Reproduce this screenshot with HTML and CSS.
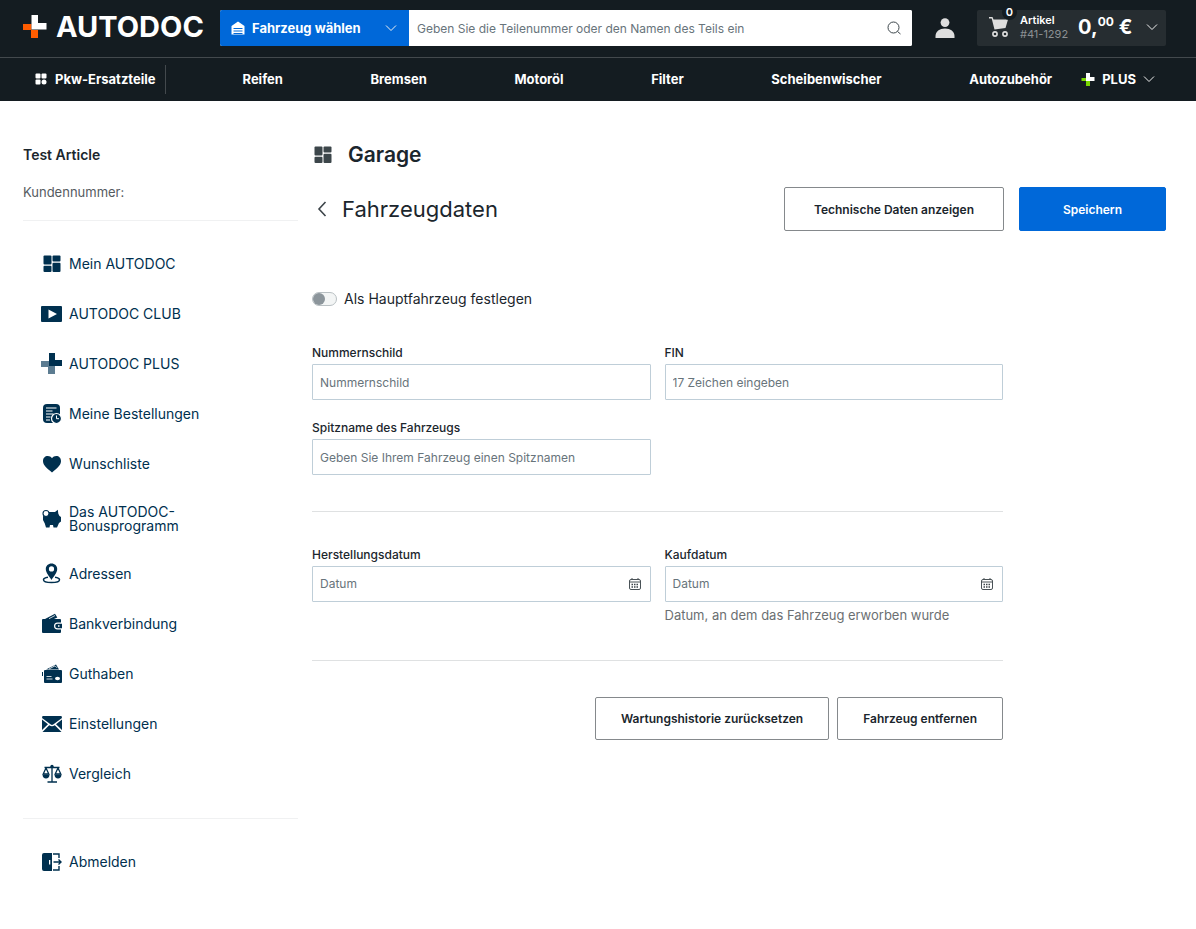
FILE: index.html
```html
<!DOCTYPE html>
<html lang="de">
<head>
<meta charset="utf-8">
<meta name="viewport" content="width=device-width, initial-scale=1">
<title>Fahrzeugdaten – Garage</title>
<link rel="stylesheet" href="styles.css">
</head>
<body>
<header class="header">
  <div class="header-top">
    <a class="logo" href="#">
      <svg class="logo-mark" viewBox="0 0 24 24" aria-hidden="true"><path fill="#ff5c00" d="M0 9h8.500v6H15v8H8v-8H0z"/><path fill="#fff" d="M8.500 0H15v8h8.500v6.500h-15z"/></svg>
      <span>AUTODOC</span>
    </a>
    <div class="search">
      <button class="vehicle-button" type="button">
        <svg class="icon-14" viewBox="0 0 14 14" aria-hidden="true"><path fill="#fff" fill-rule="evenodd" d="M7 .5 13.500 5v8.500H.5V5zM2.500 7v1h9V7zm0 2.500v1h9v-1zm0 2.500v1h9v-1z"/></svg>
        <span class="vehicle-label">Fahrzeug wählen</span>
        <svg class="chevron" viewBox="0 0 12 12" aria-hidden="true"><path d="m1 3.500 5 5 5-5"/></svg>
      </button>
      <input class="search-input" type="search" aria-label="Suche" placeholder="Geben Sie die Teilenummer oder den Namen des Teils ein">
      <button class="search-button" type="button" aria-label="Suchen">
        <svg class="icon-14" viewBox="0 0 14 14" aria-hidden="true"><g fill="none" stroke="#3c464b"><circle cx="6.500" cy="6.500" r="5.500"/><path d="m10.500 10.500 3 2.500"/></g></svg>
      </button>
    </div>
    <a class="account" href="#" aria-label="Konto"><svg viewBox="0 0 20 20" aria-hidden="true"><circle cx="10" cy="4.600" r="4.400" fill="#dedede"/><path fill="#dedede" d="M.5 20v-2C.5 13.500 4.500 10.500 10 10.500s9.500 3 9.500 7.500v2z"/></svg></a>
    <a class="cart" href="#">
      <span class="cart-icon">
        <svg viewBox="0 0 20 20" aria-hidden="true"><path fill="#dedede" d="M0 0h3.500l1 2.500H19L16.500 11l-11 1.500L2.700 1.600H0z"/><g fill="none" stroke="#dedede" stroke-width="1.600"><circle cx="6" cy="17" r="2.100"/><circle cx="16" cy="17" r="2.100"/></g></svg>
        <span class="badge">0</span>
      </span>
      <span class="cart-info"><span class="cart-title">Artikel</span><span class="cart-number">#41-1292</span></span>
      <span class="price">0,<sup>00</sup> €</span>
      <svg class="chevron" viewBox="0 0 12 12" aria-hidden="true"><path d="m1 3.500 5 5 5-5"/></svg>
    </a>
  </div>
  <nav class="nav" aria-label="Kategorien">
    <a class="nav-main" href="#">
      <svg class="icon-12" viewBox="0 0 12 12" aria-hidden="true"><g fill="#fff"><rect x=".5" y=".5" width="5" height="5" rx="1"/><rect x="6.500" y=".5" width="5" height="5" rx="1"/><rect x=".5" y="6.500" width="5" height="5" rx="1"/><circle cx="9" cy="9" r="2.500"/></g></svg>
      Pkw-Ersatzteile
    </a>
    <div class="nav-links">
      <a href="#">Reifen</a><a href="#">Bremsen</a><a href="#">Motoröl</a><a href="#">Filter</a><a href="#">Scheibenwischer</a><a href="#">Autozubehör</a>
    </div>
    <a class="nav-plus" href="#">
      <svg class="icon-14" viewBox="0 0 14 14" aria-hidden="true"><path fill="#78d700" d="M.5 6H5v3h4v5H5V9H.500z"/><path fill="#fff" d="M5 1h4v4h4.500v4H5z"/></svg>
      <span>PLUS</span>
      <svg class="chevron" viewBox="0 0 12 12" aria-hidden="true"><path d="m1 3.500 5 5 5-5"/></svg>
    </a>
  </nav>
</header>

<div class="page">
  <aside class="sidebar">
    <div class="profile">
      <p class="profile-name">Test Article</p>
      <p class="profile-number">Kundennummer:</p>
    </div>
    <nav class="menu" aria-label="Mein Konto">
      <a href="#"><svg viewBox="0 0 22 22" aria-hidden="true"><rect x="2.500" y="2.500" width="8" height="9" rx="1"/><rect x="11.500" y="2.500" width="8" height="6" rx="1"/><rect x="2.500" y="12.800" width="8" height="6.200" rx="1"/><rect x="11.500" y="9.700" width="8" height="9.300" rx="1"/></svg>Mein AUTODOC</a>
      <a href="#"><svg viewBox="0 0 22 22" aria-hidden="true"><path fill-rule="evenodd" d="M1 3h19a1 1 0 0 1 1 1v14a1 1 0 0 1-1 1H1a1 1 0 0 1-1-1V4a1 1 0 0 1 1-1zm6.500 3.500v9l8.500-4.500z"/></svg>AUTODOC CLUB</a>
      <a href="#"><svg viewBox="0 0 22 22" aria-hidden="true"><path fill="#5c7c91" d="M0 8h8v5h6v8H7v-7H0z"/><path d="M8 0h6v7h7v6H8z"/></svg>AUTODOC PLUS</a>
      <a href="#"><svg viewBox="0 0 22 22" aria-hidden="true"><rect x="2" y="1" width="17" height="19" rx="4"/><path fill="none" stroke="#fff" stroke-width="1.200" d="M5 5h10.500M5 8h6.500M5 11h7.500M5 14h4.500M5 17h4"/><circle cx="15.500" cy="15.500" r="5" stroke="#fff" stroke-width="1.200"/><path fill="none" stroke="#fff" d="M15.500 12.500v3.200h2.500"/></svg>Meine Bestellungen</a>
      <a href="#"><svg viewBox="0 0 22 22" aria-hidden="true"><path d="M11 19.500 9 17.800C4.500 14 2 11.500 2 8c0-3 2-5 4.800-5C8.500 3 10 3.800 11 5.200 12 3.800 13.500 3 15.200 3 18 3 20 5 20 8c0 3.500-2.500 6-7 9.800z"/></svg>Wunschliste</a>
      <a class="menu-tall" href="#"><svg viewBox="0 0 22 22" aria-hidden="true"><path d="M5 4h9l2.800-2.200.5 4 1.200 2.200L20 9v4.500l-2 1.500-2 4.500h-3.500L12 17H9l-.5 2.500H5L3.800 15.500 2 12V8.500z"/><circle cx="5" cy="5.500" r="3" fill="#fff" stroke="#00304f" stroke-width="1.100"/></svg><span>Das AUTODOC-Bonusprogramm</span></a>
      <a href="#"><svg viewBox="0 0 22 22" aria-hidden="true"><path fill-rule="evenodd" d="M10.500.5c3.300 0 5.700 2.400 5.700 5.500 0 3.800-3.500 7.300-5.700 11-2.200-3.700-5.700-7.200-5.700-11 0-3.100 2.400-5.500 5.700-5.500zm0 2.800a2.600 2.600 0 1 0 0 5.200 2.600 2.600 0 0 0 0-5.200z"/><path fill="none" stroke="#00304f" stroke-width="1.500" d="M7 14.300c-3 .4-4.500 1.400-4.500 2.500 0 1.800 3.500 2.800 8 2.800s8-1 8-2.800c0-1.100-1.500-2.100-4.500-2.500"/></svg>Adressen</a>
      <a href="#"><svg viewBox="0 0 22 22" aria-hidden="true"><path d="M2 6h17a1 1 0 0 1 1 1v2.500h-3.500a3.300 3.300 0 0 0 0 7H20V19a1 1 0 0 1-1 1H2a1 1 0 0 1-1-1V7a1 1 0 0 1 1-1z"/><path d="m4 6 10-5.300 2.300 3.800L13 6z"/><path stroke="#fff" stroke-width=".8" d="m8 5.700 6-3.200"/><path fill-rule="evenodd" d="M16.500 10.700H21v4.600h-4.500a2.300 2.300 0 0 1 0-4.600zm.5 1.500v1.600h1.500v-1.600z"/></svg>Bankverbindung</a>
      <a href="#"><svg viewBox="0 0 22 22" aria-hidden="true"><rect x="3" y="7" width="18" height="13" rx="1"/><path d="m5 6.500 10-5 3 5z"/><path d="M1.500 9v4" fill="none" stroke="#00304f"/><path fill="none" stroke="#fff" stroke-width=".8" d="m8 6 6-3.200 2 2M5.500 13.500h5M5.500 16h6"/><ellipse cx="16.500" cy="15.500" rx="2.500" ry="1.700" fill="#fff"/></svg>Guthaben</a>
      <a href="#"><svg viewBox="0 0 22 22" aria-hidden="true"><path d="M1.500 3h19L21 5l-8.800 6.500q-1.200.8-2.400 0L1 5zM1 6.500 7 11.300 1 17zM21 6.500 15 11.300 21 17zM8.200 12.300q2.800 2 5.600 0L20.500 19h-19z"/></svg>Einstellungen</a>
      <a href="#"><svg viewBox="0 0 22 22" aria-hidden="true"><path fill="none" stroke="#00304f" stroke-width="1.300" d="M3.500 4.500h15M11 2v17M6.500 19h9.500M5 5l-2.800 6h5.600zM17 5l-2.800 6h5.600z"/><path d="M1.500 11.500h7c0 2.500-1.500 4-3.500 4s-3.500-1.500-3.500-4zm12 0h7c0 2.500-1.500 4-3.500 4s-3.500-1.500-3.500-4z"/><circle cx="11" cy="3.500" r="1.700"/></svg>Vergleich</a>
    </nav>
    <div class="menu menu-logout">
      <a href="#"><svg viewBox="0 0 22 22" aria-hidden="true"><path fill-rule="evenodd" d="M3 2h8v18H3a2 2 0 0 1-2-2V4a2 2 0 0 1 2-2zm5 7v4.500h1.300V9z"/><path fill="none" stroke="#00304f" stroke-width="1.400" d="M12 3h6v4M12 19h6v-4M12.500 11h7.500M17.500 8.500 20 11l-2.500 2.500"/></svg>Abmelden</a>
    </div>
  </aside>

  <main class="main">
    <h1 class="title"><svg viewBox="0 0 22 22" aria-hidden="true"><rect x="2.500" y="2.500" width="8" height="9" rx="1"/><rect x="11.500" y="2.500" width="8" height="6" rx="1"/><rect x="2.500" y="12.800" width="8" height="6.200" rx="1"/><rect x="11.500" y="9.700" width="8" height="9.300" rx="1"/></svg>Garage</h1>
    <div class="toolbar">
      <a class="back" href="#" aria-label="Zurück"><svg viewBox="0 0 10 16" aria-hidden="true"><path fill="none" stroke="#3c4449" stroke-width="1.600" d="M8.500 1 2 8l6.500 7"/></svg></a>
      <h2 class="subtitle">Fahrzeugdaten</h2>
      <button class="button button-wide" type="button">Technische Daten anzeigen</button>
      <button class="button button-primary" type="submit" form="vehicle-form">Speichern</button>
    </div>
    <form class="form" id="vehicle-form">
      <div class="switch"><input type="checkbox" id="main-vehicle"><label for="main-vehicle">Als Hauptfahrzeug festlegen</label></div>
      <div class="fields">
        <div class="field"><label for="plate">Nummernschild</label><input class="box" id="plate" type="text" placeholder="Nummernschild"></div>
        <div class="field"><label for="fin">FIN</label><input class="box" id="fin" type="text" placeholder="17 Zeichen eingeben"></div>
        <div class="field"><label for="nickname">Spitzname des Fahrzeugs</label><input class="box" id="nickname" type="text" placeholder="Geben Sie Ihrem Fahrzeug einen Spitznamen"></div>
      </div>
      <div class="fields">
        <div class="field"><label for="built">Herstellungsdatum</label>
          <div class="box date"><input id="built" type="text" placeholder="Datum"><button type="button" aria-label="Kalender öffnen"><svg class="icon-12" viewBox="0 0 12 12" aria-hidden="true"><rect x=".5" y="1.500" width="11" height="10" rx="1.500" fill="none" stroke="#4a5257"/><path fill="none" stroke="#4a5257" d="M.5 4h11M3 0v2M9 0v2"/><path fill="none" stroke="#3c4449" stroke-width="1.500" stroke-dasharray="1.500 1" d="M2.500 6.500h7.500M2.500 9h7.500"/></svg></button></div>
        </div>
        <div class="field"><label for="bought">Kaufdatum</label>
          <div class="box date"><input id="bought" type="text" placeholder="Datum" aria-describedby="bought-hint"><button type="button" aria-label="Kalender öffnen"><svg class="icon-12" viewBox="0 0 12 12" aria-hidden="true"><rect x=".5" y="1.500" width="11" height="10" rx="1.500" fill="none" stroke="#4a5257"/><path fill="none" stroke="#4a5257" d="M.5 4h11M3 0v2M9 0v2"/><path fill="none" stroke="#3c4449" stroke-width="1.500" stroke-dasharray="1.500 1" d="M2.500 6.500h7.500M2.500 9h7.500"/></svg></button></div>
          <p class="hint" id="bought-hint">Datum, an dem das Fahrzeug erworben wurde</p>
        </div>
      </div>
      <div class="actions">
        <button class="button" type="button">Wartungshistorie zurücksetzen</button>
        <button class="button" type="button">Fahrzeug entfernen</button>
      </div>
    </form>
  </main>
</div>
</body>
</html>
```
FILE: styles.css
```css
* {
  box-sizing: border-box;
}

body {
  margin: 0;
  background: #fff;
  color: #1b262d;
  font-family: Inter, "Liberation Sans", sans-serif;
  font-size: 13px;
}

a {
  color: inherit;
  text-decoration: none;
}

button,
input {
  font: inherit;
  color: inherit;
}

button {
  cursor: pointer;
}

svg {
  display: block;
  flex: none;
}

h1,
h2,
p {
  margin: 0;
}

.icon-12 {
  width: 12px;
  height: 12px;
}

.icon-14 {
  width: 14px;
  height: 14px;
}

.chevron {
  width: 12px;
  height: 12px;
  fill: none;
  stroke: #f0f0f0;
}

/* Header */

.header {
  background: #141c21;
  color: #fff;
}

.header-top {
  display: flex;
  align-items: center;
  padding: 10px 30px 11px 23px;
  border-bottom: 1px solid #43494d;
}

.logo {
  display: flex;
  align-items: center;
  gap: 9px;
  width: 197px;
  padding-bottom: 3px;
  font-size: 29px;
  line-height: 32px;
  font-weight: 700;
}

.logo-mark {
  width: 24px;
  height: 24px;
}

.search {
  display: flex;
  flex: 1;
  height: 36px;
  border-radius: 2px;
  overflow: hidden;
  background: #fff;
}

.vehicle-button {
  display: flex;
  align-items: center;
  gap: 7px;
  width: 189px;
  padding: 0 12px 0 11px;
  border: 0;
  background: #0068d9;
  color: #fff;
  font-weight: 700;
}

.vehicle-label {
  flex: 1;
  text-align: left;
}

.search-input {
  flex: 1;
  min-width: 0;
  padding: 0 8px;
  border: 0;
  background: #fff;
  font-size: 12px;
  color: #141c21;
}

.search-button {
  width: 36px;
  padding: 0 11px;
  border: 0;
  background: #fff;
}

.account {
  margin: 0 22px 0 23px;
}

.account svg {
  width: 20px;
  height: 20px;
}

.cart {
  display: flex;
  align-items: center;
  width: 189px;
  height: 36px;
  padding: 0 8px 2px 12px;
  border-radius: 2px;
  background: #262d31;
}

.cart-icon {
  position: relative;
}

.cart-icon svg {
  width: 20px;
  height: 20px;
}

.badge {
  position: absolute;
  top: -12px;
  right: -8px;
  width: 15px;
  height: 15px;
  border-radius: 50%;
  background: #141c21;
  font-size: 11px;
  line-height: 15px;
  font-weight: 600;
  text-align: center;
}

.cart-info {
  display: flex;
  flex-direction: column;
  margin-left: 11px;
  font-size: 11px;
  line-height: 14px;
}

.cart-title {
  font-weight: 600;
}

.cart-number {
  color: #8c9194;
}

.price {
  flex: 1;
  margin-left: 10px;
  font-size: 20px;
  line-height: 32px;
  font-weight: 700;
  white-space: nowrap;
}

.price sup {
  font-size: 12px;
  line-height: 12px;
}

.nav {
  display: flex;
  align-items: center;
  height: 43px;
  padding: 0 41px 0 35px;
  font-weight: 700;
}

.nav-main {
  display: flex;
  align-items: center;
  gap: 8px;
  height: 29px;
  padding: 0 9px 2px 0;
  border-right: 1px solid #43494d;
}

.nav-links {
  display: flex;
  flex: 1;
  justify-content: space-between;
  margin: 0 29px 0 77px;
  padding-bottom: 2px;
}

.nav-plus {
  display: flex;
  align-items: center;
  gap: 7px;
  padding-bottom: 2px;
}

/* Sidebar */

.page {
  display: flex;
  gap: 14px;
  padding: 39px 30px 36px 23px;
}

.sidebar {
  flex: none;
  width: 275px;
}

.profile {
  padding-bottom: 18px;
  border-bottom: 1px solid #f0f1f2;
}

.profile-name {
  font-size: 14px;
  line-height: 30px;
  font-weight: 600;
}

.profile-number {
  padding-top: 12px;
  line-height: 20px;
  color: #555b5f;
}

.menu {
  display: flex;
  flex-direction: column;
  padding: 18px 0;
  color: #00304f;
  font-size: 14px;
  line-height: 14px;
}

.menu a {
  display: flex;
  align-items: center;
  gap: 6px;
  min-height: 50px;
  padding-left: 18px;
}

.menu .menu-tall {
  min-height: 60px;
}

.menu-tall span {
  width: 140px;
}

.menu svg {
  width: 22px;
  height: 22px;
  fill: #00304f;
}

.menu-logout {
  margin-top: 1px;
  border-top: 1px solid #f0f1f2;
}

/* Vehicle details */

.main {
  flex: 1;
  min-width: 0;
}

.title {
  display: flex;
  align-items: center;
  gap: 14px;
  font-size: 21px;
  line-height: 30px;
  font-weight: 600;
}

.title svg {
  width: 22px;
  height: 22px;
  fill: #3c464a;
}

.toolbar {
  display: flex;
  align-items: center;
  gap: 15px;
  margin-top: 17px;
}

.back {
  padding-left: 5px;
}

.back svg {
  width: 10px;
  height: 16px;
}

.subtitle {
  flex: 1;
  font-size: 22px;
  line-height: 28px;
  font-weight: 400;
}

.button {
  min-height: 43px;
  padding: 0 25px;
  border: 1px solid #85898c;
  border-radius: 2px;
  background: #fff;
  font-size: 12px;
  font-weight: 600;
}

.button-wide {
  min-width: 220px;
  min-height: 44px;
}

.button-primary {
  min-width: 147px;
  min-height: 44px;
  border-color: #0068d9;
  background: #0068d9;
  color: #fff;
}

.form {
  margin-right: 163px;
  padding-top: 58px;
}

.switch {
  display: flex;
  align-items: center;
  gap: 7px;
  padding-bottom: 1px;
  font-size: 14px;
  line-height: 20px;
}

.switch input {
  appearance: none;
  display: flex;
  align-items: center;
  width: 25px;
  height: 14px;
  margin: 0;
  border: 1px solid #b9c0c3;
  border-radius: 7px;
  background: #f3f5f5;
}

.switch input::before {
  content: "";
  width: 12px;
  height: 12px;
  border-radius: 50%;
  background: #8c959b;
}

.fields {
  display: grid;
  grid-template-columns: 1fr 1fr;
  gap: 20px 14px;
  padding: 35px 0 36px;
  border-bottom: 1px solid #dfe1e2;
}

.field {
  font-size: 12px;
  line-height: 16px;
}

.field label {
  display: block;
  padding-bottom: 3px;
  font-weight: 500;
}

.box {
  display: block;
  width: 100%;
  height: 36px;
  padding: 0 7px;
  border: 1px solid #bfced8;
  border-radius: 1px;
  background: #fff;
}

::placeholder {
  color: #68747b;
  opacity: 1;
}

.date {
  display: flex;
  align-items: center;
}

.date input {
  flex: 1;
  min-width: 0;
  padding: 0;
  border: 0;
}

.date button {
  padding: 2px;
  border: 0;
  background: none;
}

.hint {
  padding-top: 4px;
  color: #6b6f72;
  font-size: 13px;
  line-height: 18px;
}

.actions {
  display: flex;
  justify-content: flex-end;
  gap: 8px;
  padding-top: 36px;
}
```
